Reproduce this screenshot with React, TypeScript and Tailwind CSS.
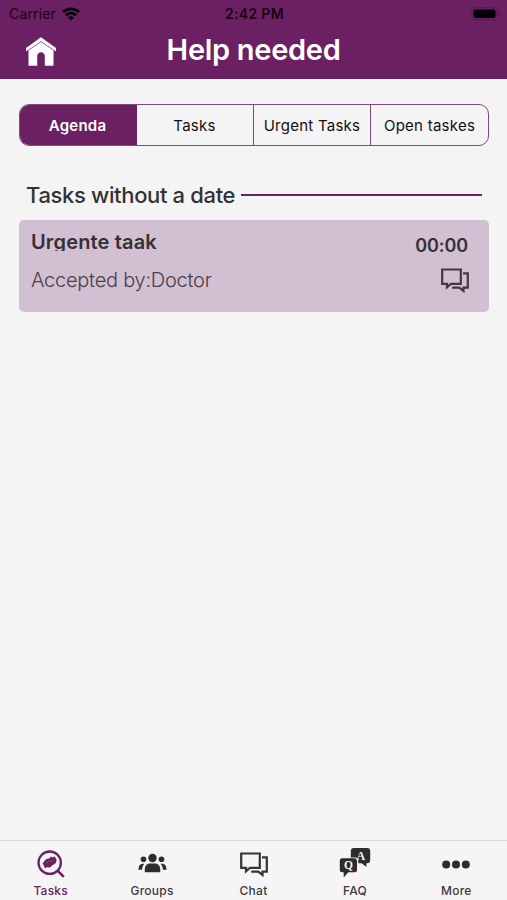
import type { ReactNode } from "react";

function WifiIcon() {
  return (
    <svg width="18" height="14" viewBox="0 0 18 14" fill="none" stroke="#050005" strokeWidth="2.7">
      <path d="M1 5.1C5.5.8 12.5.8 17 5.1" />
      <path d="M3.9 8.2c2.9-2.7 7.3-2.7 10.2 0" />
      <path d="M9 13.4 6 10.4c1.700-1.600 4.300-1.600 6 0z" fill="#050005" stroke="none" />
    </svg>
  );
}

function BatteryIcon() {
  return (
    <svg width="29" height="14" viewBox="0 0 29 14">
      <rect x="0.700" y="0.700" width="25.600" height="12" rx="4" fill="none" stroke="#561850" strokeWidth="1" />
      <rect x="2.500" y="2.500" width="22" height="8.400" rx="1.800" fill="#050005" />
      <path d="M27.500 4.700c1.500.7 1.500 3.300 0 4z" fill="#4a1347" />
    </svg>
  );
}

function HomeIcon() {
  return (
    <svg width="32" height="30" viewBox="0 0 32 30" fill="#fff">
      <path d="M16 .3 31 11v3.400L16 4.200 1 14.400V11z" />
      <path d="M16 5.100 28.500 13.600V28.700H19.800V19.200c0-5.200-7.600-5.200-7.600 0v9.500H3.500V13.600z" />
    </svg>
  );
}

function ChatIcon({ color }: { color: string }) {
  return (
    <svg width="28" height="25" viewBox="0 0 28 25" fill="none" stroke={color} strokeWidth="2.200">
      <path d="M1.200 1.500h18.600v14.300H10l-4 3.600v-3.600H1.200z" />
      <path d="M22 5.400h4.800v14.300h-4.300v3.300l-4.200-3.300h-7.100" />
    </svg>
  );
}

function TaskSearchIcon() {
  return (
    <svg width="29" height="29" viewBox="-1 0 29 29" fill="none" stroke="#6c2064">
      <circle cx="12.700" cy="12.700" r="11.200" strokeWidth="2.300" />
      <path d="m20.800 20.800 6 6" strokeWidth="2.600" />
      <path d="m5.700 13.200 3.500-4.200 3-.4 1.800-2 1.400.9 2.200-.9 2.100 3.200-.9 3.300-3.900 2.600-2.200 2-2-.6-2.700 1.200z" fill="#6c2064" stroke="none" />
      <path d="m9.500 13.600 2.300-2.500 2 .6 2-1" stroke="#a577a1" strokeWidth=".5" />
    </svg>
  );
}

function GroupsIcon() {
  return (
    <svg width="30" height="22" viewBox="0 0 30 22" fill="#2d2c2e">
      <circle cx="15.500" cy="5" r="4.200" />
      <circle cx="6.500" cy="6.300" r="2.800" />
      <circle cx="24.500" cy="6.300" r="2.800" />
      <path d="M7.800 19.300v-3c0-3.700 2.200-5.900 5.200-5.900h5c3 0 5.200 2.200 5.200 5.900v3z" />
      <path d="M1.500 16.800c0-4.500 1.800-6.500 6-6-1.700 1.600-2.300 3.500-2.400 6zM29.500 16.800c0-4.500-1.800-6.500-6-6 1.700 1.600 2.300 3.500 2.400 6z" />
    </svg>
  );
}

function FaqIcon() {
  return (
    <svg className="overflow-visible" width="32" height="31" viewBox="0 1 32 31" fill="#2d2c2e">
      <path d="M14.800 0h13.400q3 0 3 3v9.200q0 3-3 3h-.8v3.700l-4.700-3.700h-3.500V12.500q0-3-3-3h-4.400V3q0-3 3-3z" />
      <path d="M3.500 10.300h12q2.500 0 2.500 2.500v9q0 2.500-2.500 2.500H9.300L4.700 29.400v-5.100H3.500Q.8 24.300.8 21.800v-9q0-2.500 2.700-2.500z" />
      <text x="21.900" y="11.500" fill="#f5f5f5" textAnchor="middle" fontFamily="Liberation Serif, serif" fontWeight="700" fontSize="12">A</text>
      <text x="9.400" y="21.200" fill="#f5f5f5" textAnchor="middle" fontFamily="Liberation Serif, serif" fontWeight="700" fontSize="11.500">Q</text>
    </svg>
  );
}

function MoreIcon() {
  return (
    <svg width="28" height="9" viewBox="0 0 28 9" fill="#2d2c2e">
      <circle cx="4.200" cy="4.500" r="4" />
      <circle cx="14" cy="4.500" r="4" />
      <circle cx="23.800" cy="4.500" r="4" />
    </svg>
  );
}

function NavItem({ label, active = false, children }: { label: string; active?: boolean; children: ReactNode }) {
  return (
    <button className={`flex flex-1 flex-col items-center ${active ? "text-[#6c2064]" : "text-[#3b3a3c]"}`}>
      <span className="flex h-[42px] items-center justify-center pt-1">{children}</span>
      <span className="text-[12px] leading-[15px] font-medium tracking-[0.250px]">{label}</span>
    </button>
  );
}

export default function App() {
  return (
    <div className="flex h-[900px] w-[507px] flex-col overflow-hidden bg-[#f4f4f4] font-['Inter',sans-serif] text-[#343136]">
      <header className="h-[79px] bg-[#6c2064]">
        <div className="grid h-[27px] grid-cols-3 items-center pl-[9px] pr-[7px] text-[#16020f]">
          <div className="flex items-center gap-[6px] text-[14px]">
            <span className="tracking-[0.150px]">Carrier</span>
            <WifiIcon />
          </div>
          <span className="text-center text-[14px] font-semibold tracking-[0.300px]">2:42 PM</span>
          <div className="flex justify-end"><BatteryIcon /></div>
        </div>
        <div className="grid h-[45px] grid-cols-[1fr_auto_1fr] items-center pl-[25px] pr-[25px]">
          <button className="w-8 pt-[4px]" aria-label="Home"><HomeIcon /></button>
          <h1 className="text-[29px] leading-[44px] font-semibold tracking-[-0.300px] text-white">Help needed</h1>
        </div>
      </header>

      <main className="flex-1 px-[19px] pt-[25px]">
        <div className="grid h-[42px] w-[470px] grid-cols-4 overflow-hidden rounded-[10px] border border-[#85487e] text-[15px] tracking-[0.250px] text-[#111]">
          <button className="bg-[#6c2064] pt-[2px] pr-[2px] font-semibold text-white">Agenda</button>
          <button className="pt-[2px] pr-[2px] whitespace-nowrap">Tasks</button>
          <button className="-ml-px border-l border-[#85487e] pt-[2px] pr-px whitespace-nowrap">Urgent Tasks</button>
          <button className="-ml-px border-l border-[#85487e] pt-[2px] whitespace-nowrap">Open taskes</button>
        </div>

        <div className="mt-[33px] flex h-[32px] items-center gap-[6px] pl-[7px] pr-[6px]">
          <h2 className="text-[22px] leading-8 font-medium tracking-[-0.350px] whitespace-nowrap">Tasks without a date</h2>
          <div className="h-[2.500px] flex-1 bg-[#6c2064]" />
        </div>

        <article className="mt-[9px] flex h-[92px] w-[470px] justify-between rounded-[5px] bg-[#d2bfd1] pl-[12px] pr-[21px]">
          <div className="pt-[10px]">
            <h3 className="h-[21px] overflow-hidden text-[20px] leading-[25px] font-semibold tracking-[0.150px]">Urgente taak</h3>
            <p className="mt-[16px] text-[20px] leading-[26px] font-light tracking-[-0.250px] text-[#49404b]">Accepted by:Doctor</p>
          </div>
          <div className="flex flex-col items-end pt-[13px]">
            <time className="text-[18px] leading-[25px] font-semibold tracking-[-0.100px]">00:00</time>
            <button className="-mr-px mt-[10px]" aria-label="Chat"><ChatIcon color="#443744" /></button>
          </div>
        </article>
      </main>

      <nav className="flex h-[60px] border-t border-[#d9d9d9] bg-[#f5f5f5]">
        <NavItem label="Tasks" active><TaskSearchIcon /></NavItem>
        <NavItem label="Groups"><GroupsIcon /></NavItem>
        <NavItem label="Chat"><ChatIcon color="#343335" /></NavItem>
        <NavItem label="FAQ"><FaqIcon /></NavItem>
        <NavItem label="More"><MoreIcon /></NavItem>
      </nav>
    </div>
  );
}
